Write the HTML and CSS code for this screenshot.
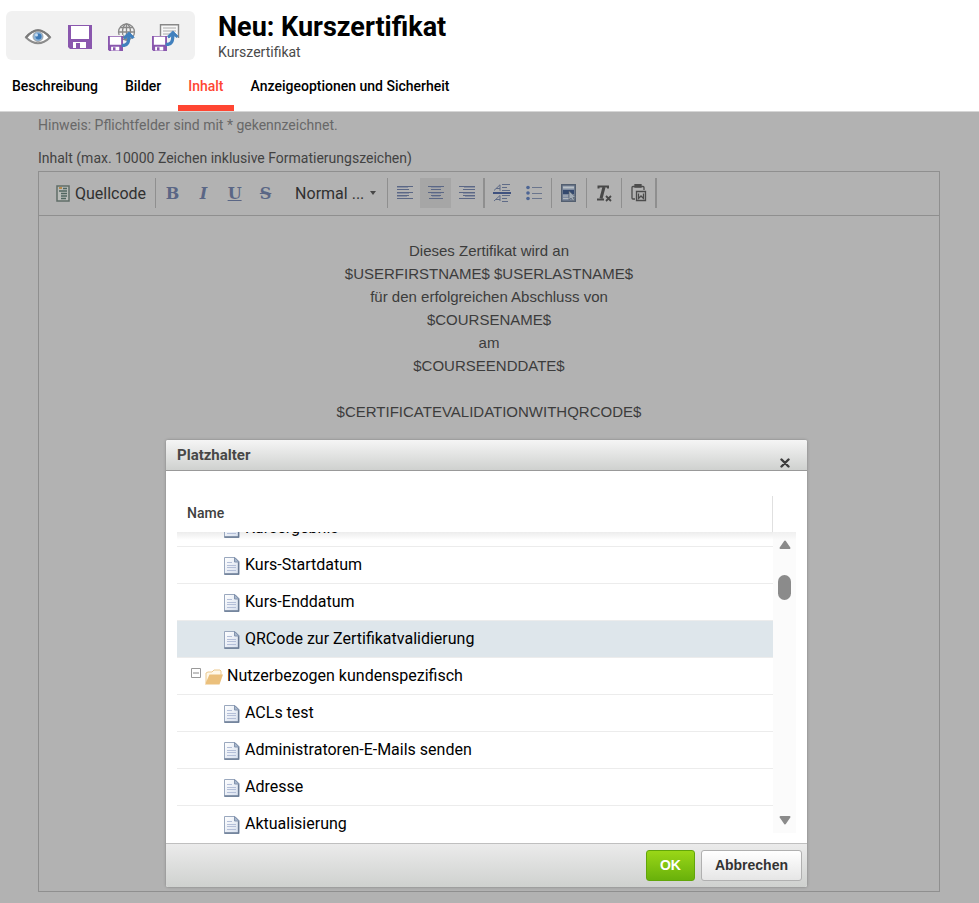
FILE: index.html
```html
<!DOCTYPE html>
<html lang="de">
<head>
    <meta charset="UTF-8">
    <meta name="viewport" content="width=device-width, initial-scale=1.0">
    <title>Neu: Kurszertifikat</title>
    <link rel="stylesheet" href="styles.css">
</head>
<body>
    <svg width="0" height="0" class="sprite" aria-hidden="true">
        <defs>
            <linearGradient id="paper" x1="0" y1="0" x2="1" y2="1">
                <stop offset="0" stop-color="#ffffff"/>
                <stop offset="1" stop-color="#d5deed"/>
            </linearGradient>
        </defs>
        <symbol id="doc" viewBox="0 0 16 18">
            <path d="M.5.5H11l4 4v13H.5z" fill="url(#paper)" stroke="#9aa8be"/>
            <path d="M14.500 5v12H.5" fill="none" stroke="#6a7b94" stroke-width="1.300"/>
            <path d="M10.500.5v4.500h4.500z" fill="#a9b8cd" stroke="#8394ae"/>
            <path d="M3 5.500h5M3 8.500h9M3 10.500h9M3 13.500h9" stroke="#b4bfd8"/>
        </symbol>
        <symbol id="floppy" viewBox="0 0 24 24">
            <path d="M0 0h24v24H2l-2-2z" fill="#8a57ae"/>
            <path d="M3 1h18v13H3zM5 17h13v6H5z" fill="#fff"/>
            <path d="M8 18h4v5H8z" fill="#8a57ae"/>
        </symbol>
        <symbol id="up" viewBox="0 0 15 18">
            <path d="M1 16.500c7 0 8-4 8-11" fill="none" stroke="#4180bd" stroke-width="3.600"/>
            <path d="M3 7l6-6 6 6-1.500 1.500L9 5.500 4.500 9z" fill="#4180bd" stroke="#4180bd"/>
        </symbol>
    </svg>

    <header class="page-header">
        <div class="title-row">
            <div class="actions">
                <button class="action" aria-label="Vorschau">
                    <svg width="28" height="28" viewBox="0 0 28 28">
                        <path d="M2 14.500Q14 0 26 14.500 14 26 2 14.500z" fill="#fff" stroke="#8c8c8c" stroke-width="2"/>
                        <path d="M2 14.500Q14 0 26 14.500" fill="none" stroke="#7b7b7b" stroke-width="2.200"/>
                        <circle cx="14" cy="13.500" r="5" fill="#8db3d6" stroke="#a5a5a5"/>
                        <circle cx="14.500" cy="13.500" r="3" fill="#3c78b5"/>
                        <circle cx="12.500" cy="12" r="1.500" fill="#c5dcf1"/>
                    </svg>
                </button>
                <button class="action" aria-label="Speichern">
                    <svg width="24" height="24"><use href="#floppy"/></svg>
                </button>
                <button class="action" aria-label="Speichern und veröffentlichen">
                    <svg width="28" height="28" viewBox="0 0 28 28">
                        <g fill="none" stroke="#888" stroke-width="1.300">
                            <circle cx="18.500" cy="9" r="8"/>
                            <ellipse cx="18.500" cy="9" rx="4" ry="8"/>
                            <path d="M18.500 1v16M10.500 9h16M12 4.500h13M12 13.500h13"/>
                        </g>
                        <rect y="12" width="15" height="16" fill="#f1f1f1"/>
                        <use href="#floppy" x="0" y="13" width="15" height="15"/>
                        <use href="#up" x="12" y="8" width="15" height="16"/>
                    </svg>
                </button>
                <button class="action" aria-label="Speichern und schließen">
                    <svg width="28" height="28" viewBox="0 0 28 28">
                        <path d="M8.500 13V1.700h18V15" fill="#f7f7f7" stroke="#888" stroke-width="1.400"/>
                        <path d="M11 5h13M11 8h13M11 11h8" stroke="#aaa"/>
                        <use href="#floppy" x="0" y="13" width="15" height="15"/>
                        <use href="#up" x="12" y="7" width="15" height="16"/>
                    </svg>
                </button>
            </div>
            <div class="titles">
                <h1>Neu: Kurszertifikat</h1>
                <p>Kurszertifikat</p>
            </div>
        </div>
        <nav class="tabs">
            <a href="#">Beschreibung</a>
            <a href="#">Bilder</a>
            <a href="#" class="active">Inhalt</a>
            <a href="#">Anzeigeoptionen und Sicherheit</a>
        </nav>
    </header>

    <main class="content">
        <p class="hint">Hinweis: Pflichtfelder sind mit * gekennzeichnet.</p>
        <p class="label" id="inhaltLabel">Inhalt (max. 10000 Zeichen inklusive Formatierungszeichen)</p>

        <div class="editor">
            <div class="toolbar" role="toolbar">
                <div class="group">
                    <button class="tool source">
                        <svg width="14" height="17" viewBox="0 0 14 17">
                            <path d="M1 1h12v15H1z" fill="#b9bcb9" stroke="#606d68" stroke-width="1.500"/>
                            <path d="M3 3h3" stroke="#b78a4d" stroke-width="2"/>
                            <path d="M7 3.500h4M3 6h8M5 8.500h6M5 11h6M5 13.500h5" stroke="#506660" stroke-width="1.500"/>
                        </svg>
                        Quellcode
                    </button>
                </div>
                <div class="group">
                    <button class="tool letter" aria-label="Fett"><b>B</b></button>
                    <button class="tool letter" aria-label="Kursiv"><i>I</i></button>
                    <button class="tool letter" aria-label="Unterstrichen"><u>U</u></button>
                    <button class="tool letter" aria-label="Durchgestrichen"><s>S</s></button>
                    <div class="format">
                        <select aria-label="Format">
                            <option>Normal ...</option>
                        </select>
                        <svg width="6" height="4" viewBox="0 0 6 4"><path d="M0 0h6L3 4z" fill="#484848"/></svg>
                    </div>
                </div>
                <div class="group thick">
                    <button class="tool" aria-label="Linksbündig">
                        <svg width="16" height="14" viewBox="0 0 16 14" stroke="#5b6785"><path d="M0 .5h16M0 3.500h12M0 6.500h16M0 9.500h12M0 12.500h16"/><path d="M0 1.500h11M0 7.500h12M0 10.500h10" stroke="#8990a2"/></svg>
                    </button>
                    <button class="tool on" aria-label="Zentriert">
                        <svg width="16" height="14" viewBox="0 0 16 14" stroke="#5b6785"><path d="M0 .5h16M3 3.500h10M0 6.500h16M3 9.500h10M1 12.500h14"/><path d="M3 1.500h10M3 7.500h10M4 10.500h8" stroke="#8990a2"/></svg>
                    </button>
                    <button class="tool" aria-label="Rechtsbündig">
                        <svg width="16" height="14" viewBox="0 0 16 14" stroke="#5b6785"><path d="M0 .5h16M4 3.500h12M0 6.500h16M4 9.500h12M0 12.500h16"/><path d="M5 1.500h11M4 7.500h12M6 10.500h10" stroke="#8990a2"/></svg>
                    </button>
                </div>
                <div class="group">
                    <button class="tool" aria-label="Seitenumbruch">
                        <svg width="18" height="18" viewBox="0 0 18 18" fill="none" stroke="#5f6b87">
                            <path d="M0 9h18" stroke="#40527f" stroke-width="2"/>
                            <path d="M1 6.500L7 .8v6M3 4.500h4M9 .5h8M9 3.500h5M9 6.500h8"/>
                            <path d="M1 17l6-5.500V17M3 15.500h4M9 11.500h8M9 14.500h5M9 17.500h6"/>
                        </svg>
                    </button>
                    <button class="tool" aria-label="Liste">
                        <svg width="16" height="16" viewBox="0 0 16 16" fill="#4d6594">
                            <circle cx="2" cy="2.500" r="1.800"/><circle cx="2" cy="8" r="1.800"/><circle cx="2" cy="13.500" r="1.800"/>
                            <path d="M6 2.500h10M6 8.500h10M6 13.500h10" stroke="#6a758d"/>
                        </svg>
                    </button>
                </div>
                <div class="group">
                    <button class="tool" aria-label="Platzhalter">
                        <svg width="16" height="18" viewBox="0 0 16 18">
                            <path d="M.7.7h13.600v16.600H.7z" fill="#7e8ba0" stroke="#535f70" stroke-width="1.400"/>
                            <path d="M2 3.500h11" stroke="#b8bfc5" stroke-width="2"/>
                            <path d="M2 6h11v4H2z" fill="#34496e"/>
                            <path d="M2 12h5M2 14.500h6" stroke="#b2b8bd"/>
                            <path d="M8 7v9l2-2 2 3 1.500-1-1.500-2.500h3z" fill="#a1abb5" stroke="#59636e" stroke-width=".7"/>
                        </svg>
                    </button>
                </div>
                <div class="group">
                    <button class="tool" aria-label="Formatierung entfernen">
                        <svg width="16" height="17" viewBox="0 0 16 17" fill="none" stroke="#484848">
                            <path d="M2.500 3.500V1.500H12v2M1 14.500h7" stroke-width="2"/>
                            <path d="M8 2L5 13.500" stroke-width="3"/>
                            <path d="M10 11l5 5M15 11l-5 5" stroke-width="1.800"/>
                        </svg>
                    </button>
                </div>
                <div class="group thick">
                    <button class="tool" aria-label="Aus Word einfügen">
                        <svg width="16" height="18" viewBox="0 0 16 18" fill="none" stroke="#4c4c4c" stroke-width="1.300">
                            <path d="M4 15H2q-1 0-1-1V3.500q0-1 1-1h10q1 0 1 1V6"/>
                            <path d="M4 .5h6V3H4z" fill="#4c4c4c"/>
                            <path d="M5.500 7.500h9v9h-9z"/>
                            <path d="M7.500 9.500v5l2.500-2.500 2.500 2.500v-5"/>
                        </svg>
                    </button>
                </div>
            </div>
            <div class="text" contenteditable="true" spellcheck="false" aria-labelledby="inhaltLabel">
                Dieses Zertifikat wird an<br>
                $USERFIRSTNAME$ $USERLASTNAME$<br>
                für den erfolgreichen Abschluss von<br>
                $COURSENAME$<br>
                am<br>
                $COURSEENDDATE$<br>
                <br>
                $CERTIFICATEVALIDATIONWITHQRCODE$
            </div>
        </div>
    </main>

    <div class="overlay">
        <div class="dialog" role="dialog" aria-labelledby="dialogTitle">
            <div class="dialog-title">
                <h2 id="dialogTitle">Platzhalter</h2>
                <button class="close" aria-label="Schließen">
                    <svg width="10" height="10" viewBox="0 0 10 10"><path d="M1.500 1.500l7 7M8.500 1.500l-7 7" stroke="#3c3c3c" stroke-width="2.400" stroke-linecap="round"/></svg>
                </button>
            </div>
            <div class="dialog-body">
                <div class="list-head"><span>Name</span></div>
                <div class="list">
                    <ul class="tree" role="tree">
                        <li role="treeitem"><svg width="16" height="18"><use href="#doc"/></svg>Kursergebnis</li>
                        <li role="treeitem"><svg width="16" height="18"><use href="#doc"/></svg>Kurs-Startdatum</li>
                        <li role="treeitem"><svg width="16" height="18"><use href="#doc"/></svg>Kurs-Enddatum</li>
                        <li role="treeitem" class="selected" aria-selected="true"><svg width="16" height="18"><use href="#doc"/></svg>QRCode zur Zertifikatvalidierung</li>
                        <li role="treeitem" class="folder" aria-expanded="true">
                            <button class="toggle" aria-label="Zuklappen">
                                <svg width="10" height="10" viewBox="0 0 10 10"><path d="M.5.5h9v9h-9z" fill="#fff" stroke="#999"/><path d="M2 5h6" stroke="#888"/></svg>
                            </button>
                            <svg width="18" height="16" viewBox="0 0 18 16">
                                <path d="M1 14V4l2-1h4l2-2h6l1 1v4" fill="#fff8e8" stroke="#ecc98f"/>
                                <path d="M0 15.500L4.500 5.500H18l-3.500 10z" fill="#ebc07c"/>
                            </svg>
                            Nutzerbezogen kundenspezifisch
                        </li>
                        <li role="treeitem"><svg width="16" height="18"><use href="#doc"/></svg>ACLs test</li>
                        <li role="treeitem"><svg width="16" height="18"><use href="#doc"/></svg>Administratoren-E-Mails senden</li>
                        <li role="treeitem"><svg width="16" height="18"><use href="#doc"/></svg>Adresse</li>
                        <li role="treeitem"><svg width="16" height="18"><use href="#doc"/></svg>Aktualisierung</li>
                    </ul>
                    <div class="scrollbar">
                        <svg width="12" height="10" viewBox="0 0 12 10"><path d="M6 1.500L10.500 8h-9z" fill="#8b8b8b" stroke="#8b8b8b" stroke-width="2" stroke-linejoin="round"/></svg>
                        <div class="thumb"></div>
                        <svg width="12" height="10" viewBox="0 0 12 10"><path d="M6 8.500L1.500 2h9z" fill="#8b8b8b" stroke="#8b8b8b" stroke-width="2" stroke-linejoin="round"/></svg>
                    </div>
                </div>
            </div>
            <div class="dialog-footer">
                <button class="btn ok">OK</button>
                <button class="btn">Abbrechen</button>
            </div>
        </div>
    </div>
</body>
</html>
```
FILE: styles.css
```css
* {
    box-sizing: border-box;
}
body {
    font-family: Roboto, Arial, sans-serif;
    font-size: 14px;
    margin: 0;
    min-height: 100vh;
    display: flex;
    flex-direction: column;
    background-color: #b2b2b2;
    color: #000;
}
h1, h2, p, ul {
    margin: 0;
    padding: 0;
}
button {
    font-family: inherit;
    border: none;
    background: none;
    padding: 0;
    cursor: pointer;
}
.sprite {
    position: absolute;
}

/* header */
.page-header {
    background-color: #fff;
    border-bottom: 1px solid #d6d6d6;
    padding: 11px 6px 0;
}
.title-row {
    display: flex;
    gap: 23px;
}
.actions {
    display: flex;
    align-items: center;
    height: 49px;
    padding: 3px 15px 0 18px;
    gap: 16px;
    background-color: #f1f1f1;
    border-radius: 6px;
}
.action {
    display: flex;
    align-items: center;
    height: 28px;
}
.titles h1 {
    font-size: 27px;
    line-height: 32px;
    font-weight: 700;
}
.titles p {
    line-height: 18px;
    color: #4a4a4a;
}
.tabs {
    display: flex;
    gap: 7px;
    margin-left: -4px;
}
.tabs a {
    height: 50px;
    padding: 0 10px;
    line-height: 51px;
    font-weight: 500;
    color: #000;
    text-decoration: none;
}
.tabs .active {
    color: #ff4632;
    border-bottom: 6px solid #ff4632;
}

/* editor */
.content {
    flex: 1;
    display: flex;
    flex-direction: column;
    padding: 3px 39px 11px 38px;
}
.hint {
    line-height: 20px;
    color: #686868;
}
.label {
    line-height: 20px;
    margin: 13px 0 3px;
    color: #424242;
}
.editor {
    flex: 1;
    display: flex;
    flex-direction: column;
    border: 1px solid #8f8f8f;
}
.toolbar {
    display: flex;
    height: 44px;
    padding: 6px 10px;
    border-bottom: 1px solid #8f8f8f;
}
.group {
    display: flex;
    height: 30px;
    padding: 0 1px;
    border-right: 1px solid #8f8f8f;
}
.group.thick {
    border-right-width: 2px;
}
.tool {
    display: flex;
    align-items: center;
    justify-content: center;
    width: 32px;
    height: 30px;
}
.group.thick .tool {
    width: 31px;
}
.tool.on {
    background-color: #a6a6a6;
}
.tool.source {
    width: auto;
    gap: 5px;
    padding: 0 8px 0 6px;
    font-size: 16px;
    color: #303030;
}
.tool.letter {
    width: 31px;
    font-family: "DejaVu Serif", serif;
    font-size: 16px;
    font-weight: 700;
    color: #5a6685;
}
.format {
    display: flex;
    align-items: center;
    padding: 0 10px 0 14px;
}
.format select {
    appearance: none;
    width: 75px;
    border: none;
    background: none;
    padding: 0;
    font-family: inherit;
    font-size: 16px;
    color: #303030;
}
.text {
    flex: 1;
    padding: 23px 20px;
    font-family: "Liberation Sans", Arial, sans-serif;
    font-size: 15px;
    line-height: 23px;
    text-align: center;
    color: #3c3c3c;
    outline: none;
}

/* dialog */
.overlay {
    position: absolute;
    inset: 0;
    display: flex;
    align-items: flex-end;
    justify-content: center;
    padding: 0 6px 16px 0;
}
.dialog {
    width: 66%;
    max-width: 641px;
    background-color: #fff;
    border-radius: 2px;
    box-shadow: 0 0 3px rgba(0, 0, 0, 0.3);
}
.dialog-title {
    display: flex;
    justify-content: space-between;
    height: 31px;
    padding: 0 17px 0 11px;
    border-bottom: 1px solid #999;
    border-radius: 2px 2px 0 0;
    background: linear-gradient(#f5f5f5, #cfd1cf);
}
.dialog-title h2 {
    font-size: 15px;
    line-height: 30px;
    color: #474747;
}
.close {
    align-self: flex-end;
    line-height: 0;
    padding-bottom: 2px;
}
.dialog-body {
    padding: 25px 11px 0;
}
.list-head {
    display: flex;
    height: 36px;
    padding-right: 23px;
}
.list-head span {
    flex: 1;
    padding-left: 10px;
    line-height: 34px;
    font-weight: 500;
    color: #404040;
    border-right: 1px solid #e0e0e0;
}
.list {
    display: flex;
    height: 311px;
    overflow: hidden;
    background: linear-gradient(#ececec, #fff 8px);
}
.tree {
    flex: 1;
    display: flex;
    flex-direction: column;
    justify-content: flex-end;
    list-style: none;
    font-size: 16px;
}
.tree li {
    flex: none;
    display: flex;
    align-items: center;
    gap: 5px;
    height: 37px;
    padding: 0 0 2px 47px;
    border-bottom: 1px solid #ececec;
}
.tree li:last-child {
    border-bottom-color: transparent;
}
.tree li > svg {
    margin-top: 4px;
}
.tree .selected {
    background-color: #dee6eb;
}
.tree .folder {
    gap: 4px;
    padding-left: 14px;
}
.toggle {
    line-height: 0;
    padding-bottom: 4px;
}
.scrollbar {
    display: flex;
    flex-direction: column;
    align-items: center;
    width: 23px;
    height: 301px;
    padding: 8px 0;
    background-color: rgba(245, 245, 245, 0.4);
}
.thumb {
    width: 13px;
    height: 25px;
    margin: 25px 0 auto;
    border-radius: 7px;
    background-color: #8b8b8b;
}
.dialog-footer {
    display: flex;
    justify-content: flex-end;
    gap: 6px;
    height: 44px;
    padding: 6px 5px;
    border-top: 1px solid #bfbfbf;
    border-radius: 0 0 2px 2px;
    background: linear-gradient(#ebebeb, #cfd1cf);
}
.btn {
    height: 31px;
    padding: 0 13px 2px;
    font-family: "Liberation Sans", Arial, sans-serif;
    font-size: 14px;
    font-weight: 700;
    color: #333;
    border: 1px solid #b0b0b0;
    border-radius: 3px;
    background: linear-gradient(#fff, #e6e6e6);
}
.btn.ok {
    color: #fff;
    border-color: #62a60a;
    background: linear-gradient(#9ad717, #69b10b);
}
```
